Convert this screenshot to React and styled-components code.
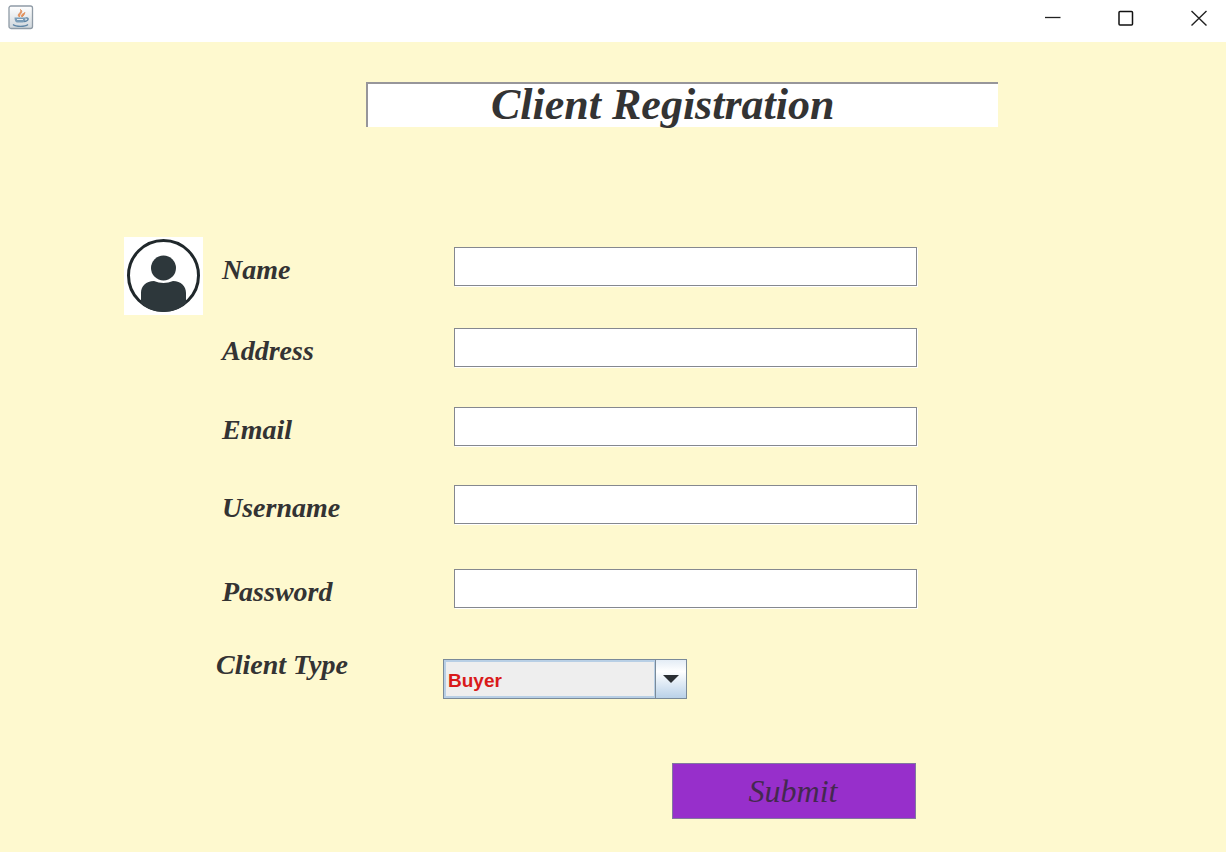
import React from "react";
import styled, { createGlobalStyle } from "styled-components";

const GlobalStyle = createGlobalStyle`
  *, *::before, *::after { box-sizing: border-box; }
  body { margin: 0; background: #fef9cf; }
`;

const serif = `"Liberation Serif", "Times New Roman", serif`;

const Frame = styled.div`
  min-height: 100vh;
  display: flex;
  flex-direction: column;
  background: #fef9cf;
  color: #333333;
  font-family: ${serif};
`;

const TitleBar = styled.header`
  display: flex;
  justify-content: space-between;
  align-items: flex-start;
  height: 42px;
  padding: 5px 1px 0 8px;
  background: #ffffff;
`;

const WindowControls = styled.div`
  display: flex;
  gap: 20px;
`;

const WindowButton = styled.button`
  display: grid;
  place-items: center;
  width: 53px;
  height: 26px;
  padding: 0;
  border: 0;
  background: transparent;
`;

const Content = styled.main`
  flex: 1;
  padding: 40px 228px 32px 124px;
`;

const Heading = styled.h1`
  height: 45px;
  margin: 0 0 110px 242px;
  padding-left: 123px;
  border-top: 2px solid #97969a;
  border-left: 2px solid #97969a;
  background: #ffffff;
  font-size: 44px;
  line-height: 42px;
  font-weight: bold;
  font-style: italic;
  white-space: nowrap;
`;

const Form = styled.form`
  display: grid;
  grid-template-columns: 79px minmax(0, 1fr);
  column-gap: 13px;
  margin-right: 81px;
`;

const Avatar = styled.svg`
  display: block;
  width: 79px;
  height: 78px;
  background: #ffffff;
`;

const Fields = styled.div`
  padding-top: 10px;
`;

const Row = styled.div`
  display: grid;
  grid-template-columns: 232px minmax(0, 1fr);
  align-items: start;
  padding-left: 6px;
  margin-bottom: ${(p) => p.$gap}px;
`;

const ChoiceRow = styled(Row)`
  grid-template-columns: 227px 244px;
  padding-left: 0;
`;

const Label = styled.label`
  padding-top: 7px;
  font-size: 28px;
  line-height: 32px;
  font-weight: bold;
  font-style: italic;
`;

const TextField = styled.input`
  width: 100%;
  height: 39px;
  padding: 0 6px;
  border: 1px solid #85888f;
  border-radius: 0;
  outline: 0;
  background: #ffffff;
  box-shadow: 1px 1px 0 #ffffff;
  font: 20px ${serif};
`;

const SelectBox = styled.div`
  display: grid;
  grid-template-columns: minmax(0, 1fr) 31px;
  height: 40px;
  margin-top: 17px;
  border: 1px solid #7a8a99;
  background: linear-gradient(#e3ecf5, #ffffff 30%, #b9d1e8);
`;

const Select = styled.select`
  grid-area: 1 / 1 / 2 / 3;
  appearance: none;
  width: 100%;
  height: 100%;
  padding: 3px 34px 0 4px;
  border: 0;
  border-radius: 0;
  outline: 0;
  background: linear-gradient(#eeeeee, #eeeeee) 2px 2px / calc(100% - 34px) calc(100% - 4px) no-repeat,
    linear-gradient(#b8cfe5, #b8cfe5) 0 0 / calc(100% - 31px) 100% no-repeat;
  color: #d91a1a;
  font: bold 19px "Liberation Sans", Arial, sans-serif;
`;

const Arrow = styled.svg`
  grid-area: 1 / 2 / 2 / 3;
  width: 31px;
  height: 38px;
  border-left: 1px solid #7a8a99;
  pointer-events: none;
`;

const SubmitButton = styled.button`
  display: block;
  width: 244px;
  height: 56px;
  margin: 0 1px 0 auto;
  padding: 0 2px 0 0;
  border: 1px solid #8277a0;
  background: #972fcb;
  color: #44294f;
  font: italic 32px ${serif};
`;

const textRows = [
  { id: "name", label: "Name", gap: 42 },
  { id: "address", label: "Address", gap: 40 },
  { id: "email", label: "Email", gap: 39 },
  { id: "username", label: "Username", gap: 45 },
  { id: "password", label: "Password", type: "password", gap: 34 },
];

function JavaIcon() {
  return (
    <svg width="26" height="26" viewBox="0 1 26 26" aria-hidden="true">
      <defs>
        <linearGradient id="tile" x1="0" y1="0" x2="0" y2="1">
          <stop offset="0" stopColor="#ffffff" />
          <stop offset="1" stopColor="#cfd6dc" />
        </linearGradient>
      </defs>
      <rect x="1" y="2" width="23.5" height="22.5" rx="2" fill="url(#tile)" stroke="#8f9ba6" strokeWidth="1.3" />
      <path d="M11.500 13c-4-3 3-4 1-7.500 3.500 3-1.500 4-1 7.500zM14 13c-2-2 1-3 3-4.500-1 2-1 3-3 4.500z" fill="#e8935a" stroke="#e0915f" strokeWidth="1" />
      <path d="M6.500 13.500h11c0 3-1 5-3 5h-5c-2 0-3-2-3-5z" fill="#7b9db8" />
      <path d="M9 15.500h6" fill="none" stroke="#e6eef4" strokeWidth="1" />
      <path d="M17.500 14c4-.8 3.500 3-1.500 3.500M5 20.500c3 2.500 12 2.500 15 0" fill="none" stroke="#5f86a6" strokeWidth="1.300" />
    </svg>
  );
}

export default function App() {
  return (
    <Frame>
      <GlobalStyle />
      <TitleBar>
        <JavaIcon />
        <WindowControls>
          <WindowButton type="button" aria-label="Minimize">
            <svg width="16" height="16" viewBox="0 0 16 16">
              <path d="M0 7.500h15.500" stroke="#222" strokeWidth="1.300" />
            </svg>
          </WindowButton>
          <WindowButton type="button" aria-label="Maximize">
            <svg width="16" height="16" viewBox="0 0 16 16">
              <rect x="1" y="1.500" width="13.500" height="13.500" rx="1" fill="none" stroke="#111" strokeWidth="1.500" />
            </svg>
          </WindowButton>
          <WindowButton type="button" aria-label="Close">
            <svg width="16" height="16" viewBox="0 0 16 16">
              <path d="M.5 1l15 14.500M15.500 1l-15 14.500" stroke="#222" strokeWidth="1.400" />
            </svg>
          </WindowButton>
        </WindowControls>
      </TitleBar>
      <Content>
        <Heading>Client Registration</Heading>
        <Form onSubmit={(e) => e.preventDefault()}>
          <Avatar viewBox="0 0 79 78" aria-hidden="true">
            <circle cx="39.500" cy="38.500" r="35" fill="none" stroke="#20282b" strokeWidth="3" />
            <circle cx="39.500" cy="31" r="12.500" fill="#2d373b" />
            <path d="M17 66V56c0-7 5-12 13-12 6 2.500 13 2.500 19 0 8 0 13 5 13 12v10c-11 12-34 12-45 0z" fill="#2d373b" />
          </Avatar>
          <Fields>
            {textRows.map(({ id, label, type = "text", gap }) => (
              <Row key={id} $gap={gap}>
                <Label htmlFor={id}>{label}</Label>
                <TextField id={id} type={type} />
              </Row>
            ))}
            <ChoiceRow $gap={64}>
              <Label htmlFor="clientType">Client Type</Label>
              <SelectBox>
                <Select id="clientType" defaultValue="Buyer">
                  <option>Buyer</option>
                </Select>
                <Arrow viewBox="0 0 30 38" aria-hidden="true">
                  <path d="M7 15h16l-8 8z" fill="#2b2f33" />
                </Arrow>
              </SelectBox>
            </ChoiceRow>
            <SubmitButton type="submit">Submit</SubmitButton>
          </Fields>
        </Form>
      </Content>
    </Frame>
  );
}
